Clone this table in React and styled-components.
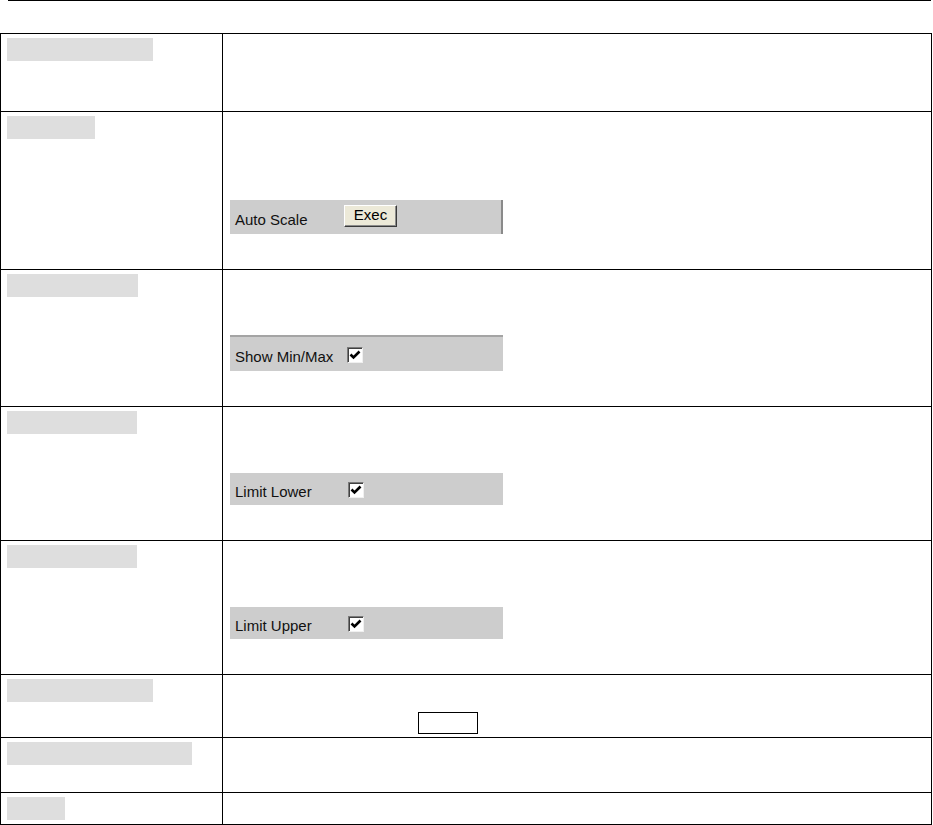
import React from 'react';
import styled, { createGlobalStyle } from 'styled-components';

const GlobalStyle = createGlobalStyle`
    html, body {
        margin: 0;
        padding: 0;
        background: #fff;
    }
    body {
        font-family: "Liberation Sans", Arial, sans-serif;
        color: #000;
    }
`;

const Page = styled.div`
    width: 933px;
    height: 825px;
    overflow: hidden;
`;

const TopRule = styled.div`
    margin-left: 8px;
    width: 923px;
    height: 1px;
    background: #000;
    margin-bottom: 32px;
`;

const Table = styled.table`
    border-collapse: collapse;
    width: 932px;
    table-layout: fixed;
`;

const Row = styled.tr`
    height: ${p => p.h}px;
`;

const LabelCell = styled.td`
    width: 222px;
    border: 1px solid #000;
    vertical-align: top;
    padding: 4px 0 0 6px;
    box-sizing: border-box;
`;

const BodyCell = styled.td`
    border: 1px solid #000;
    vertical-align: top;
    padding: ${p => p.top}px 0 0 7px;
    box-sizing: border-box;
`;

const LabelBar = styled.div`
    width: ${p => p.w}px;
    height: 23px;
    background: #dedede;
`;

const Panel = styled.div`
    width: 273px;
    height: ${p => p.h || 32}px;
    box-sizing: border-box;
    background: #cdcdcd;
    display: flex;
    align-items: center;
    padding: 4px 0 0 5px;
    font-size: 15px;
    color: #111;
    border-top: ${p => (p.topLine ? '2px solid #a4a4a4' : 'none')};
    border-right: ${p => (p.rightLine ? '2px solid #8a8a8a' : 'none')};
`;

const PanelLabel = styled.span`
    width: ${p => p.w}px;
    flex: none;
`;

const ExecButton = styled.button`
    width: 53px;
    height: 22px;
    margin-top: -7px;
    padding: 0 0 3px;
    font-family: "Liberation Sans", Arial, sans-serif;
    font-size: 15px;
    color: #000;
    background: #ece9d8;
    border: 1px solid;
    border-color: #fff #3a3a3a #3a3a3a #fff;
    box-shadow: inset -1px -1px 0 #8c8c8c;
`;

const CheckBox = styled.span`
    width: 16px;
    height: 16px;
    flex: none;
    box-sizing: border-box;
    background: #fff;
    border: 1px solid;
    border-color: #7a7a7a #f0f0f0 #f0f0f0 #7a7a7a;
    box-shadow: inset 1px 1px 0 #404040;
    display: flex;
    align-items: center;
    justify-content: center;
    margin-top: -3px;
`;

const OutlineBox = styled.div`
    margin-left: 188px;
    width: 60px;
    height: 22px;
    box-sizing: border-box;
    border: 1px solid #000;
`;

const Check = () => (
    <CheckBox>
        <svg width="12" height="12" viewBox="0 0 12 12">
            <path d="M1.5 5.5 L4.5 8.5 L10.5 2.5" fill="none" stroke="#000" strokeWidth="2.6" />
        </svg>
    </CheckBox>
);

const rows = [
    { h: 78, bar: 146 },
    {
        h: 158,
        bar: 88,
        top: 88,
        widget: (
            <Panel h={34} rightLine>
                <PanelLabel w={109}>Auto Scale</PanelLabel>
                <ExecButton>Exec</ExecButton>
            </Panel>
        ),
    },
    {
        h: 137,
        bar: 131,
        top: 65,
        widget: (
            <Panel h={36} topLine>
                <PanelLabel w={112}>Show Min/Max</PanelLabel>
                <Check />
            </Panel>
        ),
    },
    {
        h: 134,
        bar: 130,
        top: 66,
        widget: (
            <Panel>
                <PanelLabel w={113}>Limit Lower</PanelLabel>
                <Check />
            </Panel>
        ),
    },
    {
        h: 134,
        bar: 130,
        top: 66,
        widget: (
            <Panel>
                <PanelLabel w={113}>Limit Upper</PanelLabel>
                <Check />
            </Panel>
        ),
    },
    { h: 63, bar: 146, top: 37, widget: <OutlineBox /> },
    { h: 55, bar: 185 },
    { h: 32, bar: 58 },
];

export default function App() {
    return (
        <Page>
            <GlobalStyle />
            <TopRule />
            <Table>
                <tbody>
                    {rows.map((r, i) => (
                        <Row key={i} h={r.h}>
                            <LabelCell>
                                <LabelBar w={r.bar} />
                            </LabelCell>
                            <BodyCell top={r.top || 0}>{r.widget}</BodyCell>
                        </Row>
                    ))}
                </tbody>
            </Table>
        </Page>
    );
}
